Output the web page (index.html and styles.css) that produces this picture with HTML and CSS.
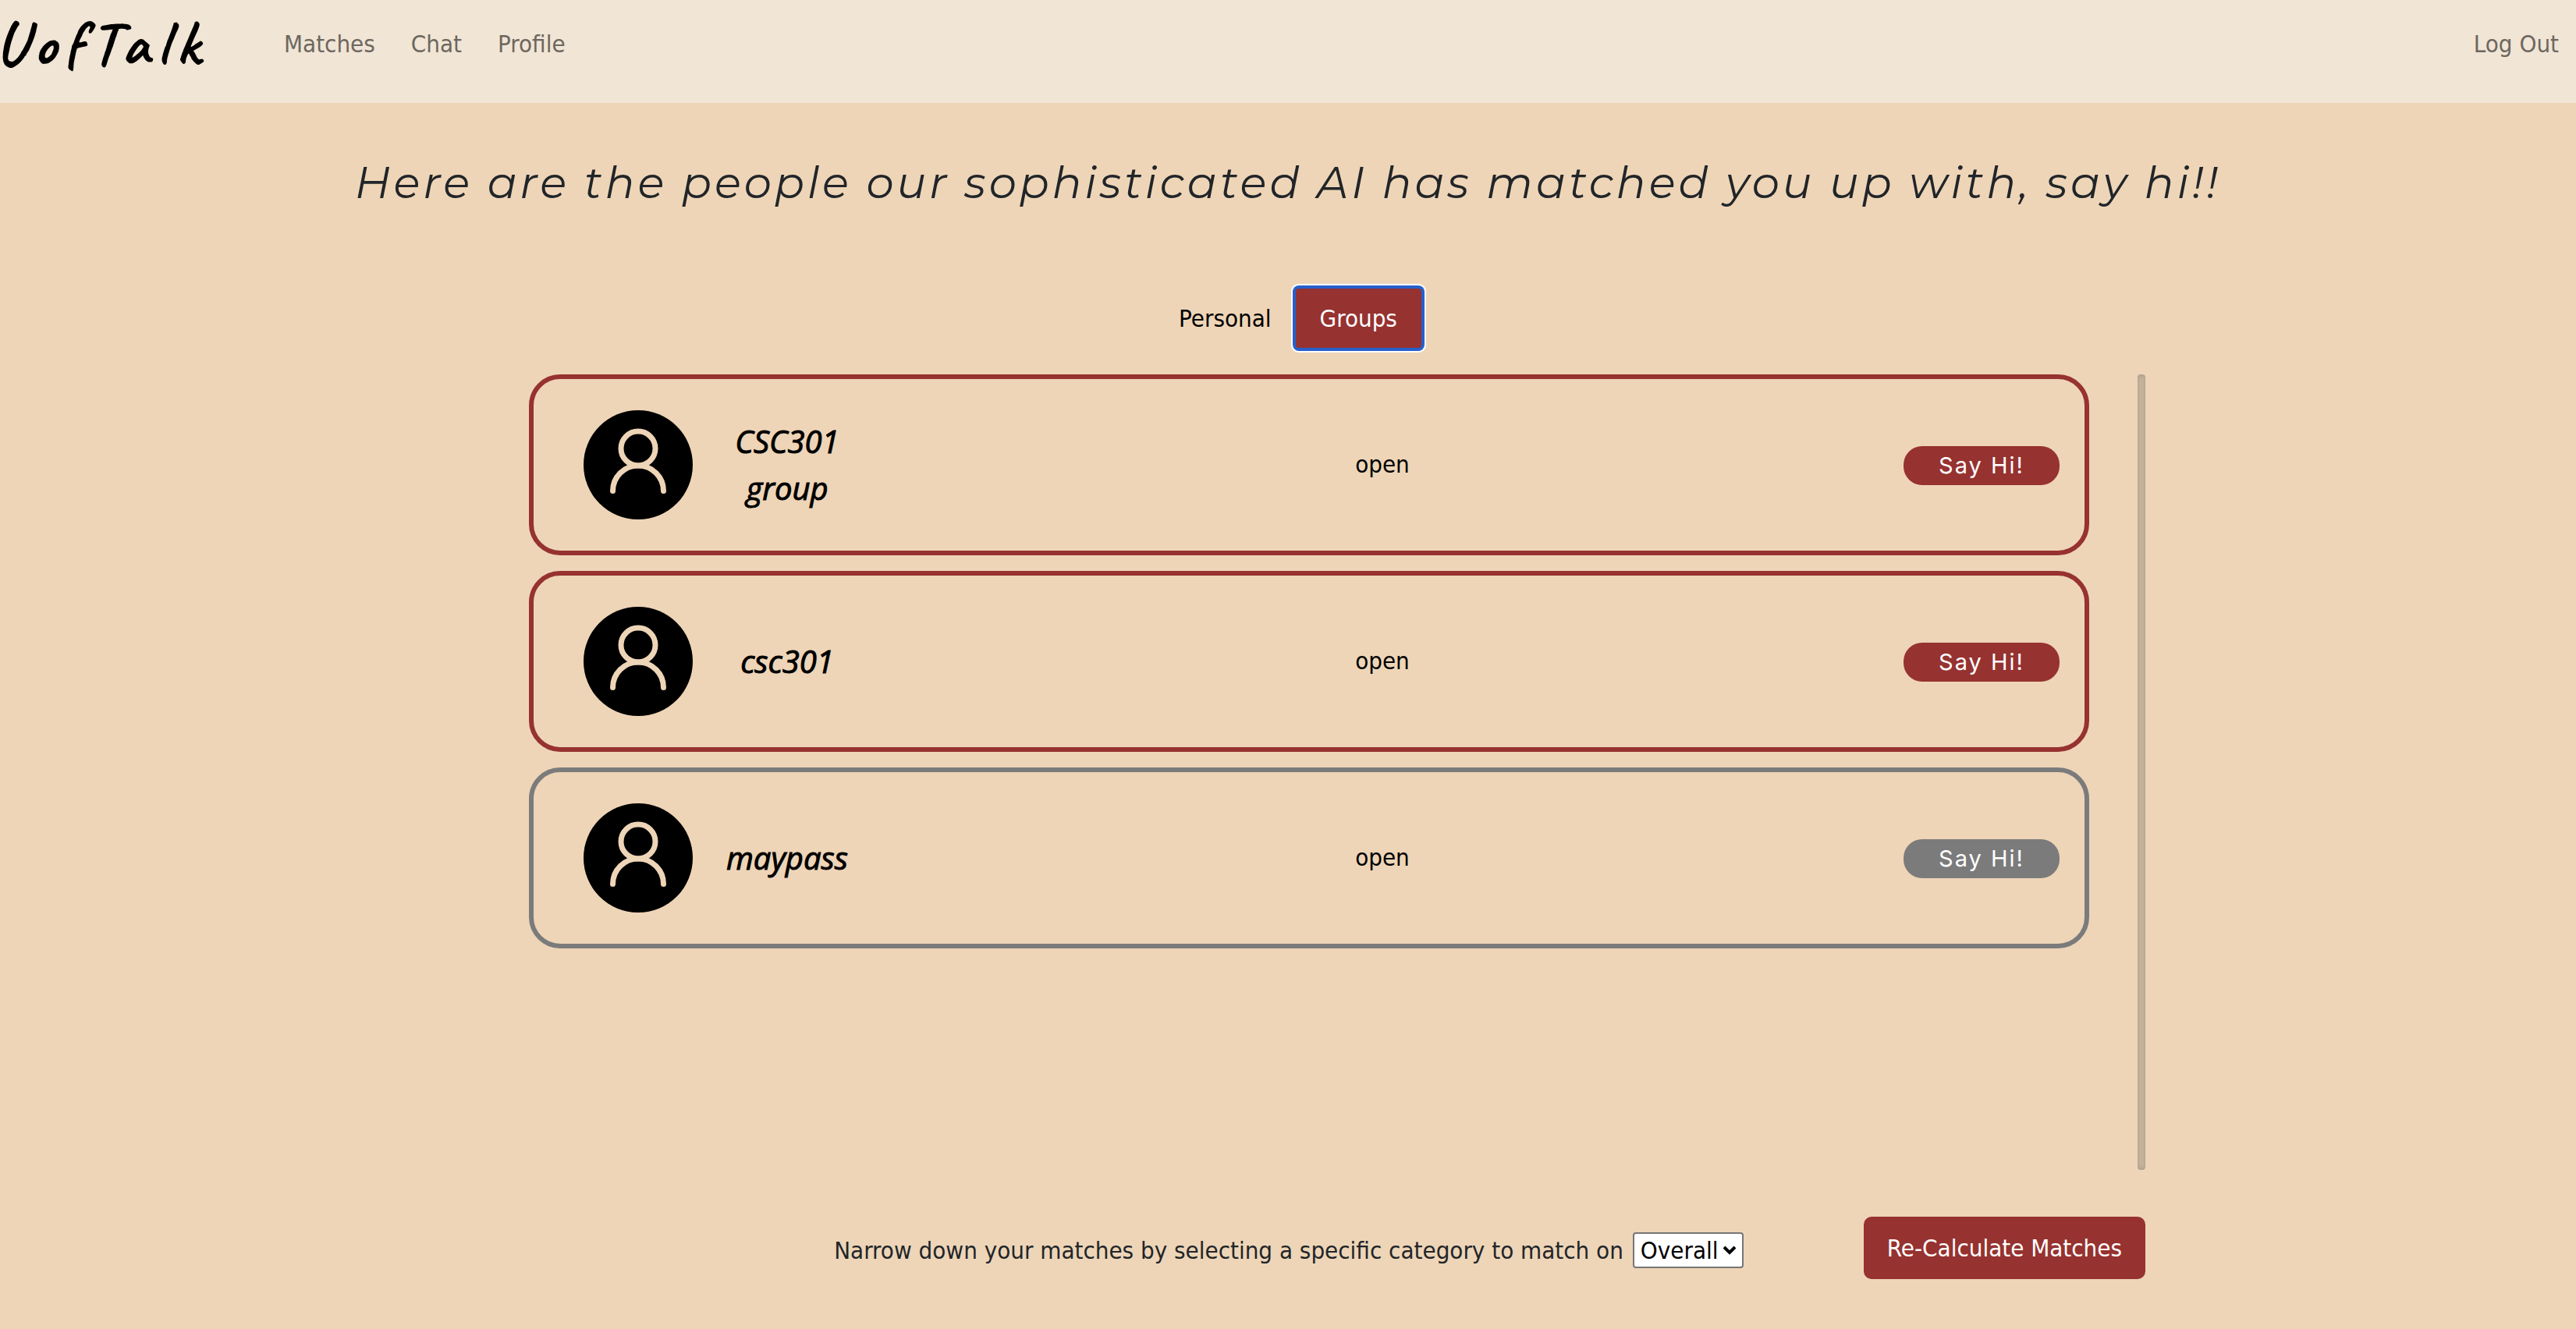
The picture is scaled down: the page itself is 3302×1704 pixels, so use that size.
FILE: index.html
```html
<!DOCTYPE html>
<html lang="en">
<head>
<meta charset="utf-8">
<meta name="viewport" content="width=device-width, initial-scale=1">
<title>UofTalk</title>
<link rel="stylesheet" href="styles.css">
</head>
<body>
<svg class="symbols" aria-hidden="true">
  <symbol id="avatar" viewBox="0 0 140 140">
    <circle cx="70" cy="70" r="70" fill="#000"/>
    <g fill="none" stroke="#eed5b7" stroke-width="7" stroke-linecap="round">
      <circle cx="70" cy="49" r="22"/>
      <path d="M37.5 103.5A32.5 32.5 0 0 1 102.5 103.5"/>
    </g>
  </symbol>
</svg>
<header class="navbar">
  <a class="brand" href="#">UofTalk</a>
  <nav class="links">
    <a href="#">Matches</a>
    <a href="#">Chat</a>
    <a href="#">Profile</a>
  </nav>
  <a class="logout" href="#">Log Out</a>
</header>
<main>
  <h1>Here are the people our sophisticated AI has matched you up with, say hi!!</h1>
  <div class="tabs">
    <button type="button">Personal</button>
    <button type="button" class="active">Groups</button>
  </div>
  <div class="content">
    <div class="matches">
      <ul class="list">
        <li class="card">
          <svg class="avatar" aria-hidden="true"><use href="#avatar"/></svg>
          <h2>CSC301 group</h2>
          <p>open</p>
          <button type="button">Say Hi!</button>
        </li>
        <li class="card">
          <svg class="avatar" aria-hidden="true"><use href="#avatar"/></svg>
          <h2>csc301</h2>
          <p>open</p>
          <button type="button">Say Hi!</button>
        </li>
        <li class="card muted">
          <svg class="avatar" aria-hidden="true"><use href="#avatar"/></svg>
          <h2>maypass</h2>
          <p>open</p>
          <button type="button">Say Hi!</button>
        </li>
      </ul>
      <div class="track"></div>
    </div>
    <div class="actions">
      <div class="filter">
        <label for="category">Narrow down your matches by selecting a specific category to match on</label>
        <span class="picker">
          <select id="category"><option>Overall</option></select>
          <svg class="chevron" viewBox="0 0 20 14" aria-hidden="true"><path d="M3 3L10 10L17 3"/></svg>
        </span>
      </div>
      <button type="button" class="recalculate">Re-Calculate Matches</button>
    </div>
  </div>
</main>
</body>
</html>
```
FILE: styles.css
```css
:root {
  --maroon: #963230;
  --gray: #7b7b7b;
  --sand: #eed5b7;
  --ink: #212529;
}

* { box-sizing: border-box; }

body {
  margin: 0;
  background: var(--sand);
  color: var(--ink);
  font: 31px/48px "DejaVu Sans Condensed", "DejaVu Sans", sans-serif;
}

h1, h2, p, ul { margin: 0; padding: 0; }

button, select {
  font: inherit;
  color: inherit;
  cursor: pointer;
}

a { text-decoration: none; }

.symbols {
  position: absolute;
  width: 0;
  height: 0;
}

.navbar {
  display: flex;
  align-items: flex-start;
  min-height: 132px;
  padding: 0 22px 0 0;
  background: #f1e5d5;
}

.brand {
  width: 370px;
  margin-left: -6px;
  padding-top: 16px;
  color: #000;
  font: 700 80px/80px Caveat, cursive;
  letter-spacing: 10px;
}

.links {
  display: flex;
  gap: 46px;
}

.links a, .logout {
  padding-top: 32px;
  color: #6d675f;
}

.logout { margin-left: auto; }

h1 {
  padding: 66px 0 62px;
  text-align: center;
  font: italic 400 56px/72px Montserrat, Inter, sans-serif;
  letter-spacing: 4px;
}

.tabs {
  display: flex;
  justify-content: center;
  margin-top: 38px;
}

.tabs button {
  padding: 14px 31px;
  border: 0;
  border-radius: 4px;
  background: transparent;
  color: #000;
}

.tabs .active {
  background: var(--maroon);
  box-shadow: 0 0 0 4px #2660cb, 0 0 0 6px #fff;
  color: #fff;
}

.content {
  max-width: 2198px;
  margin: 34px auto 0;
  padding-left: 126px;
}

.matches {
  display: flex;
  gap: 62px;
  min-height: 1020px;
}

.list {
  display: flex;
  flex: 1;
  flex-direction: column;
  gap: 20px;
  list-style: none;
}

.track {
  width: 10px;
  border-radius: 4px;
  background: #cab8a0;
  box-shadow: inset 0 0 6px rgba(0, 0, 0, 0.2);
}

.card {
  display: grid;
  grid-template-columns: 140px 216px 1fr 200px;
  align-items: center;
  min-height: 232px;
  padding: 0 32px 0 64px;
  border: 6px solid var(--maroon);
  border-radius: 40px;
  text-align: center;
}

.avatar {
  display: block;
  width: 140px;
  height: 140px;
}

.card h2 {
  padding-left: 26px;
  color: #000;
  font: italic 400 40px/60px "Open Sans", sans-serif;
  -webkit-text-stroke: 1px #000;
}

.card p {
  padding-bottom: 2px;
  color: #000;
}

.card button {
  height: 50px;
  margin-top: 2px;
  padding: 0;
  border: 0;
  border-radius: 24px;
  background: var(--maroon);
  color: #fff;
  font: 400 29px/48px Inter, sans-serif;
  letter-spacing: 2px;
}

.muted { border-color: var(--gray); }
.card.muted button { background: var(--gray); }

.actions {
  display: flex;
  justify-content: flex-end;
  align-items: center;
  gap: 154px;
  margin-top: 60px;
}

.filter {
  display: flex;
  align-items: center;
  gap: 12px;
  padding-top: 6px;
}

.picker { position: relative; }

.picker select {
  display: block;
  width: 142px;
  height: 46px;
  padding: 0 8px;
  border: 2px solid #767676;
  border-radius: 4px;
  background: #fff;
  color: #000;
  line-height: 40px;
  appearance: none;
}

.chevron {
  position: absolute;
  top: 16px;
  right: 8px;
  width: 20px;
  height: 14px;
  fill: none;
  stroke: #000;
  stroke-width: 4;
  pointer-events: none;
}

.recalculate {
  height: 80px;
  padding: 0 30px;
  border: 0;
  border-radius: 10px;
  background: var(--maroon);
  color: #fff;
}
```
